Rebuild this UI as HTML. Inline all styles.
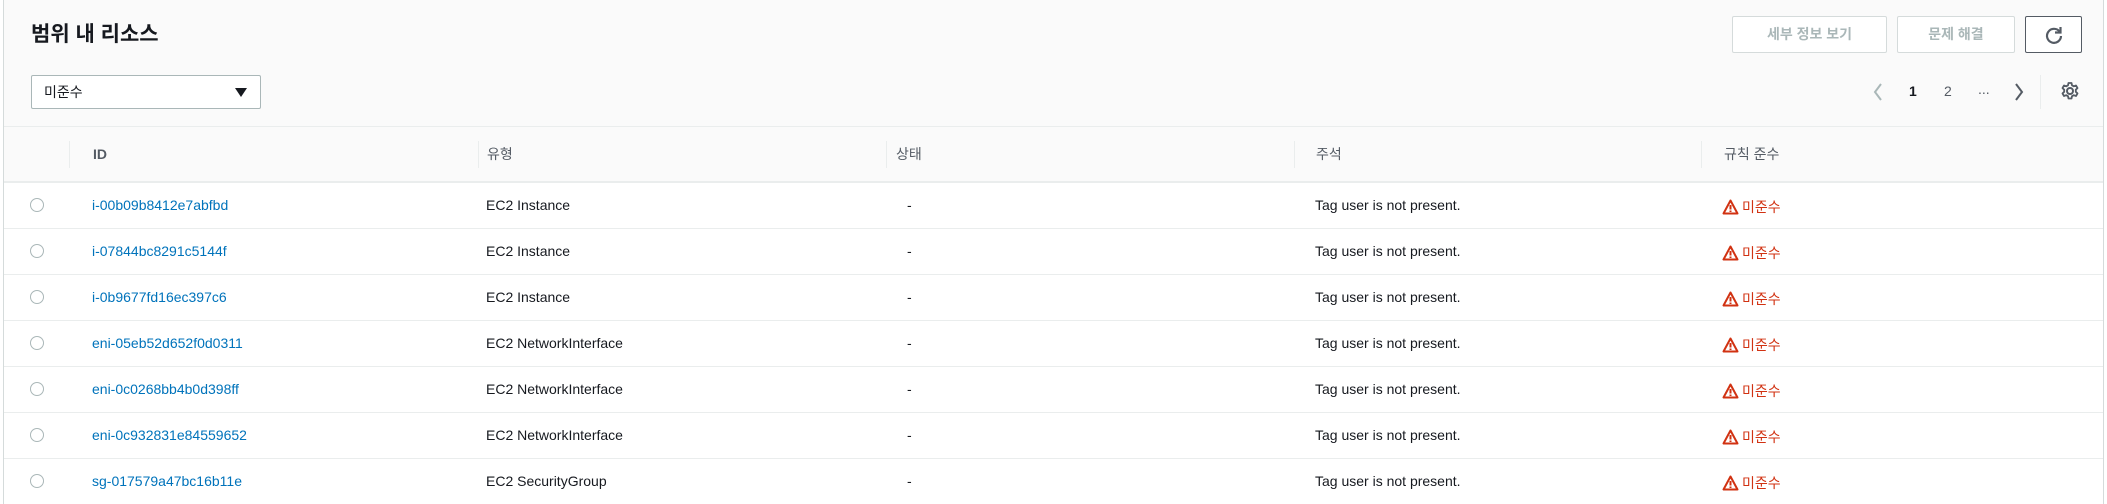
<!DOCTYPE html>
<html><head><meta charset="utf-8"><style>
*{box-sizing:border-box;margin:0;padding:0}
body{width:2107px;height:504px;overflow:hidden;background:#fff;font-family:"Liberation Sans","Noto Sans CJK KR",sans-serif;font-size:14px;color:#16191f;position:relative}
.wrap{position:absolute;left:3px;top:0;width:2101px;height:504px;border-left:1px solid #d5dbdb;border-right:1px solid #d5dbdb}
.top{position:absolute;left:0;top:0;width:100%;height:182px;background:#fafafa;border-bottom:1px solid #eaeded}
.hdrline{position:absolute;left:0;top:126px;width:100%;border-top:1px solid #eaeded}
h1{position:absolute;left:27px;top:18px;font-size:21px;font-weight:bold}
.sel{position:absolute;left:27px;top:75px;width:230px;height:34px;border:1px solid #aab7b8;border-radius:2px;background:#fff;padding:0 12px;line-height:32px}
.sel:after{content:"";position:absolute;right:13px;top:12px;border-left:6px solid transparent;border-right:6px solid transparent;border-top:9px solid #16191f}
.btn{position:absolute;top:16px;height:37px;border:1px solid #d5dbdb;border-radius:2px;background:#fff;color:#aab7b8;font-weight:bold;text-align:center;line-height:35px;font-size:14px}
.th{position:absolute;top:141px;height:27px;border-left:1px solid #eaeded;line-height:27px;color:#545b64}
.th b{position:absolute;top:0;white-space:nowrap;font-weight:normal}
.row{position:absolute;left:0;width:100%;height:46px;border-top:1px solid #eaeded}
.row span{position:absolute;top:14px}
.radio{position:absolute;left:26px;top:15px;width:14px;height:14px;border:1px solid #aab7b8;border-radius:50%}
.id{color:#0073bb}
.nc{color:#d13212}
.nc svg{vertical-align:-3px;margin-right:3px}
</style></head><body>
<div class="wrap">
<div class="top"></div>
<div class="hdrline"></div>
<h1>범위 내 리소스</h1>
<div class="sel">미준수</div>
<div class="btn" style="left:1728px;width:155px">세부 정보 보기</div>
<div class="btn" style="left:1893px;width:118px">문제 해결</div>
<div class="btn" style="left:2021px;width:57px;border-color:#545b64">
<svg width="20" height="20" viewBox="0 0 20 20" style="margin-top:8px"><path d="M15.5 6.5A7 7 0 1 0 17 11" fill="none" stroke="#545b64" stroke-width="2.2"/><path d="M16.5 2v5.5H11" fill="none" stroke="#545b64" stroke-width="2.2"/></svg></div>
<svg style="position:absolute;left:1868px;top:82px" width="12" height="20"><path d="M9 2L3 10l6 8" fill="none" stroke="#aab7b8" stroke-width="2"/></svg>
<div style="position:absolute;left:1905px;top:83px;font-weight:bold">1</div>
<div style="position:absolute;left:1940px;top:83px;color:#545b64">2</div>
<div style="position:absolute;left:1974px;top:81px;color:#545b64">...</div>
<svg style="position:absolute;left:2009px;top:82px" width="12" height="20"><path d="M3 2l6 8-6 8" fill="none" stroke="#545b64" stroke-width="2"/></svg>
<div style="position:absolute;left:2036px;top:75px;height:34px;border-left:1px solid #eaeded"></div>
<svg style="position:absolute;left:2056px;top:81px" width="20" height="20" viewBox="0 0 20 20"><circle cx="10" cy="10" r="3" fill="none" stroke="#545b64" stroke-width="2"/><path d="M8.5 2h3l.5 2.3 1.8 1 2.2-.8 1.5 2.6-1.7 1.6v2.1l1.7 1.6-1.5 2.6-2.2-.8-1.8 1-.5 2.3h-3l-.5-2.3-1.8-1-2.2.8-1.5-2.6 1.7-1.6V8.7L2.5 7.1 4 4.5l2.2.8 1.8-1z" fill="none" stroke="#545b64" stroke-width="1.8" stroke-linejoin="round"/></svg>
<div class="th" style="left:65px"><b style="left:23px;font-weight:bold">ID</b></div>
<div class="th" style="left:474px"><b style="left:8px">유형</b></div>
<div class="th" style="left:882px"><b style="left:9px">상태</b></div>
<div class="th" style="left:1290px"><b style="left:21px">주석</b></div>
<div class="th" style="left:1697px"><b style="left:22px">규칙 준수</b></div>

<div class="row" style="top:182px"><div class="radio"></div><span class="id" style="left:88px">i-00b09b8412e7abfbd</span><span style="left:482px">EC2 Instance</span><span style="left:903px">-</span><span style="left:1311px">Tag user is not present.</span><span class="nc" style="left:1718px"><svg width="17" height="16" viewBox="0 0 17 16"><path d="M8.5 1.5L1.5 14.5h14z" fill="none" stroke="#d13212" stroke-width="2" stroke-linejoin="round"/><path d="M8.5 6v4.5M8.5 11.5v1.5" stroke="#d13212" stroke-width="2"/></svg>미준수</span></div>
<div class="row" style="top:228px"><div class="radio"></div><span class="id" style="left:88px">i-07844bc8291c5144f</span><span style="left:482px">EC2 Instance</span><span style="left:903px">-</span><span style="left:1311px">Tag user is not present.</span><span class="nc" style="left:1718px"><svg width="17" height="16" viewBox="0 0 17 16"><path d="M8.5 1.5L1.5 14.5h14z" fill="none" stroke="#d13212" stroke-width="2" stroke-linejoin="round"/><path d="M8.5 6v4.5M8.5 11.5v1.5" stroke="#d13212" stroke-width="2"/></svg>미준수</span></div>
<div class="row" style="top:274px"><div class="radio"></div><span class="id" style="left:88px">i-0b9677fd16ec397c6</span><span style="left:482px">EC2 Instance</span><span style="left:903px">-</span><span style="left:1311px">Tag user is not present.</span><span class="nc" style="left:1718px"><svg width="17" height="16" viewBox="0 0 17 16"><path d="M8.5 1.5L1.5 14.5h14z" fill="none" stroke="#d13212" stroke-width="2" stroke-linejoin="round"/><path d="M8.5 6v4.5M8.5 11.5v1.5" stroke="#d13212" stroke-width="2"/></svg>미준수</span></div>
<div class="row" style="top:320px"><div class="radio"></div><span class="id" style="left:88px">eni-05eb52d652f0d0311</span><span style="left:482px">EC2 NetworkInterface</span><span style="left:903px">-</span><span style="left:1311px">Tag user is not present.</span><span class="nc" style="left:1718px"><svg width="17" height="16" viewBox="0 0 17 16"><path d="M8.5 1.5L1.5 14.5h14z" fill="none" stroke="#d13212" stroke-width="2" stroke-linejoin="round"/><path d="M8.5 6v4.5M8.5 11.5v1.5" stroke="#d13212" stroke-width="2"/></svg>미준수</span></div>
<div class="row" style="top:366px"><div class="radio"></div><span class="id" style="left:88px">eni-0c0268bb4b0d398ff</span><span style="left:482px">EC2 NetworkInterface</span><span style="left:903px">-</span><span style="left:1311px">Tag user is not present.</span><span class="nc" style="left:1718px"><svg width="17" height="16" viewBox="0 0 17 16"><path d="M8.5 1.5L1.5 14.5h14z" fill="none" stroke="#d13212" stroke-width="2" stroke-linejoin="round"/><path d="M8.5 6v4.5M8.5 11.5v1.5" stroke="#d13212" stroke-width="2"/></svg>미준수</span></div>
<div class="row" style="top:412px"><div class="radio"></div><span class="id" style="left:88px">eni-0c932831e84559652</span><span style="left:482px">EC2 NetworkInterface</span><span style="left:903px">-</span><span style="left:1311px">Tag user is not present.</span><span class="nc" style="left:1718px"><svg width="17" height="16" viewBox="0 0 17 16"><path d="M8.5 1.5L1.5 14.5h14z" fill="none" stroke="#d13212" stroke-width="2" stroke-linejoin="round"/><path d="M8.5 6v4.5M8.5 11.5v1.5" stroke="#d13212" stroke-width="2"/></svg>미준수</span></div>
<div class="row" style="top:458px"><div class="radio"></div><span class="id" style="left:88px">sg-017579a47bc16b11e</span><span style="left:482px">EC2 SecurityGroup</span><span style="left:903px">-</span><span style="left:1311px">Tag user is not present.</span><span class="nc" style="left:1718px"><svg width="17" height="16" viewBox="0 0 17 16"><path d="M8.5 1.5L1.5 14.5h14z" fill="none" stroke="#d13212" stroke-width="2" stroke-linejoin="round"/><path d="M8.5 6v4.5M8.5 11.5v1.5" stroke="#d13212" stroke-width="2"/></svg>미준수</span></div>
</div>
</body></html>
